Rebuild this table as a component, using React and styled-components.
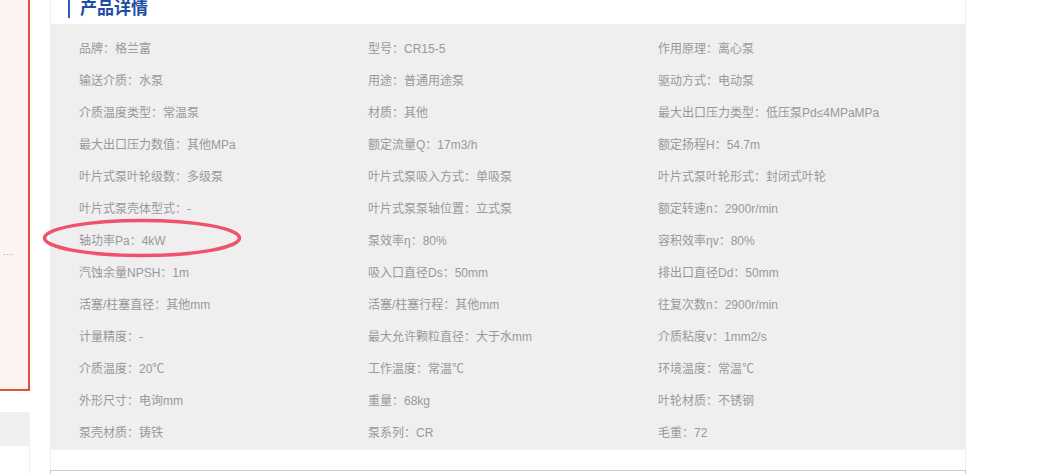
import styled, { createGlobalStyle } from 'styled-components';

const GlobalStyle = createGlobalStyle`
  html, body {
    margin: 0;
    padding: 0;
    background: #fff;
    overflow: hidden;
  }
  body {
    font-family: "Liberation Sans", "Noto Sans CJK SC", sans-serif;
  }
`;

// 제품 속성 데이터 (3열로 흐름)
const specs = [
  '品牌：格兰富', '型号：CR15-5', '作用原理：离心泵',
  '输送介质：水泵', '用途：普通用途泵', '驱动方式：电动泵',
  '介质温度类型：常温泵', '材质：其他', '最大出口压力类型：低压泵Pd≤4MPaMPa',
  '最大出口压力数值：其他MPa', '额定流量Q：17m3/h', '额定扬程H：54.7m',
  '叶片式泵叶轮级数：多级泵', '叶片式泵吸入方式：单吸泵', '叶片式泵叶轮形式：封闭式叶轮',
  '叶片式泵壳体型式：-', '叶片式泵泵轴位置：立式泵', '额定转速n：2900r/min',
  '轴功率Pa：4kW', '泵效率η：80%', '容积效率ηv：80%',
  '汽蚀余量NPSH：1m', '吸入口直径Ds：50mm', '排出口直径Dd：50mm',
  '活塞/柱塞直径：其他mm', '活塞/柱塞行程：其他mm', '往复次数n：2900r/min',
  '计量精度：-', '最大允许颗粒直径：大于水mm', '介质粘度v：1mm2/s',
  '介质温度：20℃', '工作温度：常温℃', '环境温度：常温℃',
  '外形尺寸：电询mm', '重量：68kg', '叶轮材质：不锈钢',
  '泵壳材质：铸铁', '泵系列：CR', '毛重：72',
];

const Page = styled.div`
  display: flex;
  gap: 20px;
  margin-top: -16px;
  height: 490px;
  overflow: hidden;
`;

const Side = styled.div`
  width: 30px;
  display: flex;
  flex-direction: column;
`;

const SideCard = styled.div`
  height: 405px;
  background: #fdf4f2;
  border-right: 2px solid #e0533b;
  border-bottom: 2px solid #e0533b;
  position: relative;
`;

const Dots = styled.span`
  position: absolute;
  left: 3px;
  top: 263px;
  font-size: 9px;
  line-height: 10px;
  color: #8a8a8a;
  letter-spacing: 1px;
`;

const SideTab = styled.div`
  margin-top: 21px;
  height: 34px;
  background: #efefef;
`;

const SideBox = styled.div`
  flex: 1;
  border-right: 1px solid #eee;
`;

const Main = styled.div`
  width: 916px;
  display: flex;
  flex-direction: column;
`;

const Panel = styled.section`
  border-left: 1px solid #eee;
  border-right: 1px solid #eee;
  padding-bottom: 20px;
  position: relative;
`;

const Header = styled.div`
  height: 40px;
  display: flex;
  align-items: flex-end;
  padding: 0 0 6px 17px;
  box-sizing: border-box;
`;

const Title = styled.h2`
  margin: 0;
  font-size: 17px;
  line-height: 18px;
  font-weight: 700;
  color: #1f4da6;
  border-left: 2px solid #2b5cb8;
  padding-left: 10px;
`;

const SpecGrid = styled.ul`
  list-style: none;
  margin: 0;
  padding: 9px 0 1px 28px;
  background: #efefef;
  display: grid;
  grid-template-columns: 289px 290px 1fr;
`;

const SpecItem = styled.li`
  height: 32px;
  line-height: 32px;
  font-size: 12px;
  color: #999;
  white-space: nowrap;
`;

const Mark = styled.svg`
  position: absolute;
  left: -10px;
  top: 232px;
  pointer-events: none;
`;

const Below = styled.div`
  height: 40px;
  border: 1px solid #ccc;
  border-bottom: none;
`;

export default function App() {
  return (
    <>
      <GlobalStyle />
      <Page>
        <Side>
          <SideCard>
            <Dots>...</Dots>
          </SideCard>
          <SideTab />
          <SideBox />
        </Side>
        <Main>
          <Panel>
            <Header>
              <Title>产品详情</Title>
            </Header>
            <SpecGrid>
              {specs.map((s) => (
                <SpecItem key={s}>{s}</SpecItem>
              ))}
            </SpecGrid>
            {/* 붉은 타원 표시 */}
            <Mark width="206" height="44" viewBox="0 0 206 44">
              <ellipse cx="101" cy="22" rx="97.5" ry="17.5" fill="none" stroke="#f0526b" strokeWidth="3.5" />
            </Mark>
          </Panel>
          <Below />
        </Main>
      </Page>
    </>
  );
}
